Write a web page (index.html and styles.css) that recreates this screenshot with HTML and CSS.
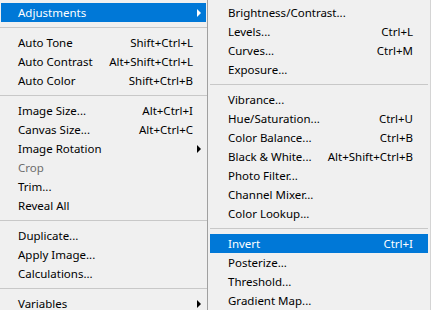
FILE: index.html
```html
<!DOCTYPE html>
<html lang="en">
<head>
    <meta charset="UTF-8">
    <meta name="viewport" content="width=device-width, initial-scale=1.0">
    <title>Image menu</title>
    <link rel="stylesheet" href="styles.css">
</head>
<body>
    <div class="menus">
        <ul class="menu menu-main">
            <li class="item active"><span class="label">Adjustments</span><span class="arrow"></span></li>
            <li class="sep"></li>
            <li class="item"><span class="label">Auto Tone</span><span class="key">Shift+Ctrl+L</span></li>
            <li class="item"><span class="label">Auto Contrast</span><span class="key">Alt+Shift+Ctrl+L</span></li>
            <li class="item"><span class="label">Auto Color</span><span class="key">Shift+Ctrl+B</span></li>
            <li class="sep"></li>
            <li class="item"><span class="label">Image Size...</span><span class="key">Alt+Ctrl+I</span></li>
            <li class="item"><span class="label">Canvas Size...</span><span class="key">Alt+Ctrl+C</span></li>
            <li class="item"><span class="label">Image Rotation</span><span class="arrow"></span></li>
            <li class="item disabled"><span class="label">Crop</span></li>
            <li class="item"><span class="label">Trim...</span></li>
            <li class="item"><span class="label">Reveal All</span></li>
            <li class="sep"></li>
            <li class="item"><span class="label">Duplicate...</span></li>
            <li class="item"><span class="label">Apply Image...</span></li>
            <li class="item"><span class="label">Calculations...</span></li>
            <li class="sep"></li>
            <li class="item"><span class="label">Variables</span><span class="arrow"></span></li>
        </ul>

        <ul class="menu menu-sub">
            <li class="item"><span class="label">Brightness/Contrast...</span></li>
            <li class="item"><span class="label">Levels...</span><span class="key">Ctrl+L</span></li>
            <li class="item"><span class="label">Curves...</span><span class="key">Ctrl+M</span></li>
            <li class="item"><span class="label">Exposure...</span></li>
            <li class="sep"></li>
            <li class="item"><span class="label">Vibrance...</span></li>
            <li class="item"><span class="label">Hue/Saturation...</span><span class="key">Ctrl+U</span></li>
            <li class="item"><span class="label">Color Balance...</span><span class="key">Ctrl+B</span></li>
            <li class="item"><span class="label">Black &amp; White...</span><span class="key">Alt+Shift+Ctrl+B</span></li>
            <li class="item"><span class="label">Photo Filter...</span></li>
            <li class="item"><span class="label">Channel Mixer...</span></li>
            <li class="item"><span class="label">Color Lookup...</span></li>
            <li class="sep"></li>
            <li class="item active"><span class="label">Invert</span><span class="key">Ctrl+I</span></li>
            <li class="item"><span class="label">Posterize...</span></li>
            <li class="item"><span class="label">Threshold...</span></li>
            <li class="item"><span class="label">Gradient Map...</span></li>
        </ul>
    </div>
</body>
</html>
```

FILE: styles.css
```css
body {
    margin: 0;
    background-color: #f0f0f0;
    font-family: "Noto Sans", "Open Sans", sans-serif;
    font-size: 11.5px;
    color: #000;
    overflow: hidden;
}
.menus {
    display: flex;
    align-items: flex-start;
    height: 310px;
}
.menu {
    list-style: none;
    margin: 0;
    padding: 3px 0 0;
    background-color: #f0f0f0;
    box-sizing: border-box;
}
.menu-main {
    width: 207px;
    padding-left: 1px;
    padding-right: 1px;
}
.menu-sub {
    flex: 1;
    height: 310px;
    border-left: 1px solid #a0a0a0;
    border-right: 1px solid #d4d4d4;
    padding-left: 2px;
    padding-right: 2px;
}
.item {
    display: flex;
    align-items: center;
    height: 19px;
    line-height: 19px;
    white-space: nowrap;
}
.menu-main .item {
    padding-left: 17px;
    padding-right: 4px;
}
.menu-sub .item {
    padding-left: 18px;
    padding-right: 15px;
}
.label {
    flex: 1;
}
.key {
    text-align: right;
}
.menu-main .key {
    margin-right: 9px;
}
.arrow {
    width: 0;
    height: 0;
    border-top: 4px solid transparent;
    border-bottom: 4px solid transparent;
    border-left: 4px solid #000;
    margin-right: 1px;
}
.item.active {
    background-color: #0078d7;
    color: #fff;
}
.item.active .arrow {
    border-left-color: #fff;
}
.item.disabled {
    color: #6d6d6d;
}
.sep {
    height: 11px;
    box-sizing: border-box;
    padding-top: 5px;
}
.sep::after {
    content: "";
    display: block;
    height: 1px;
    background-color: #c8c8c8;
}
.menu-main .sep::after {
    margin-left: -1px;
    margin-right: -1px;
}
```
